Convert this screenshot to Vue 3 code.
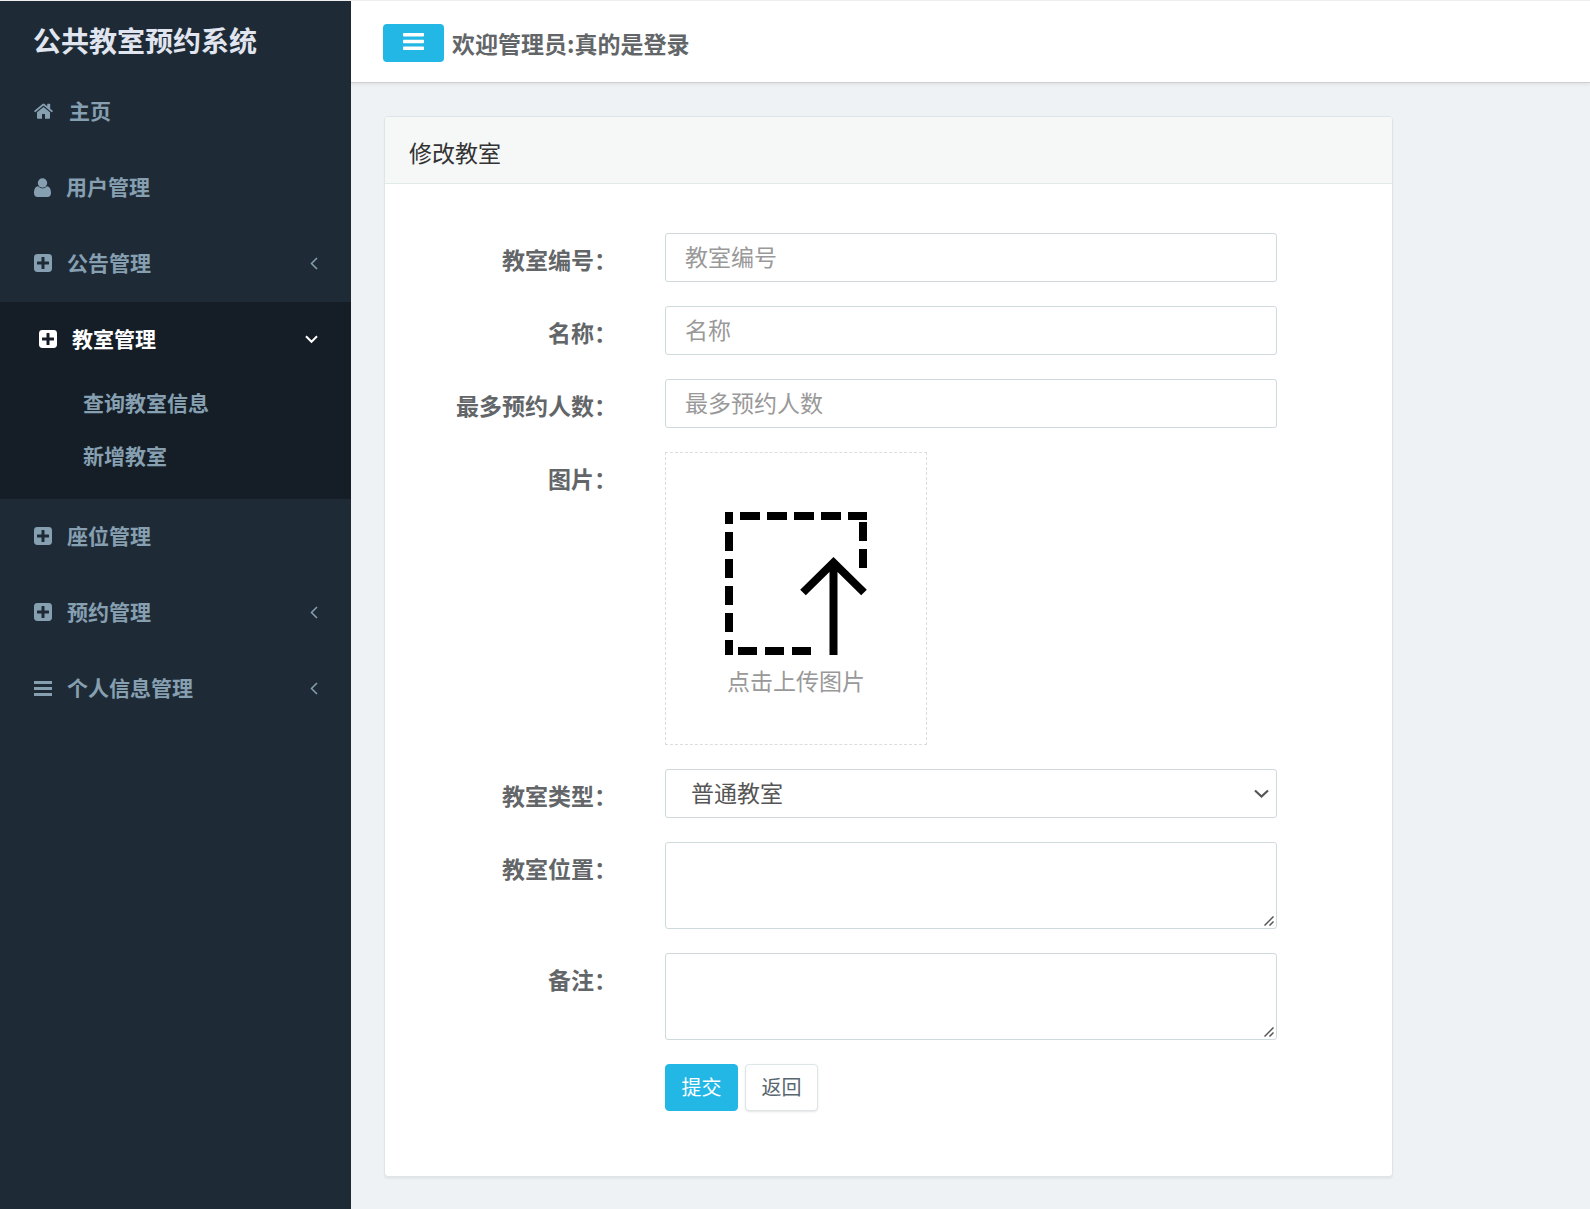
<script setup>
import { ref } from 'vue'

const menu = [
  { label: '主页', icon: 'home' },
  { label: '用户管理', icon: 'user' },
  { label: '公告管理', icon: 'plus', collapsible: true },
  { label: '教室管理', icon: 'plus', collapsible: true, children: ['查询教室信息', '新增教室'] },
  { label: '座位管理', icon: 'plus' },
  { label: '预约管理', icon: 'plus', collapsible: true },
  { label: '个人信息管理', icon: 'bars', collapsible: true },
]

const sidebarOpen = ref(true)
const form = ref({ number: '', name: '', capacity: '', type: '普通教室', location: '', remark: '' })
</script>

<template>
  <div class="layout">
    <aside v-show="sidebarOpen" class="sidebar">
      <h1 class="brand">公共教室预约系统</h1>
      <nav>
        <ul class="menu">
          <li v-for="item in menu" :key="item.label" :class="{ active: item.children }">
            <a href="#" class="menu-link">
              <svg v-if="item.icon === 'home'" width="20" height="16" viewBox="0 0 20 16" fill="currentColor" aria-hidden="true">
                <path d="M9.500 4 3 9.300V15a.8.800 0 0 0 .8.800h4.200V11h3v4.800h4.200a.8.800 0 0 0 .8-.8V9.300z" />
                <path d="M18.700 7.800 16.200 5.700V1.200a.5.500 0 0 0-.5-.5h-2a.5.500 0 0 0-.5.500v2L10.500.9a1.600 1.600 0 0 0-2 0L.3 7.800a.4.400 0 0 0 0 .6l.6.700q.3.300.7 0L9.500 2.500l7.900 6.600q.4.300.7 0l.6-.7a.4.400 0 0 0 0-.6z" />
              </svg>
              <svg v-else-if="item.icon === 'user'" width="17" height="19" viewBox="0 0 17 19" fill="currentColor" aria-hidden="true">
                <circle cx="8.500" cy="5" r="4.700" />
                <path d="M4 8.300C1.200 8.700 0 11.500 0 15c0 2.400 1.400 4 3.500 4h10c2.100 0 3.500-1.600 3.500-4 0-3.500-1.200-6.300-4-6.700A6 6 0 0 1 8.500 10.400 6 6 0 0 1 4 8.300z" />
              </svg>
              <svg v-else-if="item.icon === 'plus'" width="18" height="18" viewBox="0 0 18 18" fill="currentColor" fill-rule="evenodd" aria-hidden="true">
                <path d="M3.400 0h11.200A3.400 3.400 0 0 1 18 3.400v11.200a3.400 3.400 0 0 1-3.400 3.400H3.400A3.400 3.400 0 0 1 0 14.600V3.400A3.400 3.400 0 0 1 3.400 0zM8 3a.5.500 0 0 0-.5.500v4h-4a.5.500 0 0 0-.5.500v2a.5.500 0 0 0 .5.500h4v4a.5.500 0 0 0 .5.500h2a.5.500 0 0 0 .5-.5v-4h4a.5.500 0 0 0 .5-.5V8a.5.500 0 0 0-.5-.5h-4v-4A.5.500 0 0 0 10 3z" />
              </svg>
              <svg v-else width="18" height="15" viewBox="0 0 18 15" fill="currentColor" aria-hidden="true">
                <path d="M0 0h18v3H0zM0 6h18v3H0zM0 12h18v3H0z" />
              </svg>
              <span class="menu-text">{{ item.label }}</span>
              <svg v-if="item.children" width="13" height="9" viewBox="0 0 13 9" fill="none" stroke="currentColor" stroke-width="2" aria-hidden="true">
                <path d="M1 1.300 6.500 6.800 12 1.300" />
              </svg>
              <svg v-else-if="item.collapsible" width="8" height="13" viewBox="0 0 8 13" fill="none" stroke="currentColor" stroke-width="1.500" aria-hidden="true">
                <path d="M7 1 1.500 6.500 7 12" />
              </svg>
            </a>
            <ul v-if="item.children" class="submenu">
              <li v-for="child in item.children" :key="child"><a href="#">{{ child }}</a></li>
            </ul>
          </li>
        </ul>
      </nav>
    </aside>

    <div class="main">
      <header class="topbar">
        <button type="button" class="toggle" aria-label="菜单" @click="sidebarOpen = !sidebarOpen">
          <svg width="21" height="17" viewBox="0 0 21 17" fill="currentColor" aria-hidden="true">
            <rect width="21" height="3.600" rx=".8" /><rect y="6.700" width="21" height="3.600" rx=".8" /><rect y="13.400" width="21" height="3.600" rx=".8" />
          </svg>
        </button>
        <span class="welcome">欢迎管理员:真的是登录</span>
      </header>

      <main class="content">
        <section class="panel">
          <h2 class="panel-title">修改教室</h2>
          <form class="form" @submit.prevent>
            <label for="number">教室编号：</label>
            <input id="number" v-model="form.number" type="text" placeholder="教室编号">

            <label for="name">名称：</label>
            <input id="name" v-model="form.name" type="text" placeholder="名称">

            <label for="capacity">最多预约人数：</label>
            <input id="capacity" v-model="form.capacity" type="text" placeholder="最多预约人数">

            <label for="picture">图片：</label>
            <button id="picture" type="button" class="upload">
              <svg width="143" height="144" viewBox="0 0 143 144" fill="none" stroke="#000" stroke-width="8" aria-hidden="true">
                <path d="M4 1v12M4 21v19M4 48v19M4 75v19M4 102v19M4 129v15" />
                <path d="M15 5h20M42 5h20M69 5h20M96 5h20M123 5h19M138 11v19M138 38v19" />
                <path d="M13 140h19M40 140h19M67 140h19M108.500 144V52M78 81.500 108.500 51.500 139 81.500" />
              </svg>
              <span>点击上传图片</span>
            </button>

            <label for="type">教室类型：</label>
            <div class="field">
              <select id="type" v-model="form.type">
                <option>普通教室</option>
              </select>
              <svg class="select-arrow" width="15" height="10" viewBox="0 0 15 10" fill="none" stroke="#555" stroke-width="2.200" aria-hidden="true">
                <path d="M1 1.500 7.500 7.500 14 1.500" />
              </svg>
            </div>

            <label for="location">教室位置：</label>
            <div class="field">
              <textarea id="location" v-model="form.location"></textarea>
              <svg class="grip" width="10" height="10" viewBox="0 0 10 10" stroke="#555" stroke-width="1.500" aria-hidden="true">
                <path d="M.5 9.500 9.500.5M5.500 9.500l4-4" />
              </svg>
            </div>

            <label for="remark">备注：</label>
            <div class="field">
              <textarea id="remark" v-model="form.remark"></textarea>
              <svg class="grip" width="10" height="10" viewBox="0 0 10 10" stroke="#555" stroke-width="1.500" aria-hidden="true">
                <path d="M.5 9.500 9.500.5M5.500 9.500l4-4" />
              </svg>
            </div>

            <div class="actions">
              <button type="submit" class="btn primary">提交</button>
              <button type="button" class="btn">返回</button>
            </div>
          </form>
        </section>
      </main>
    </div>
  </div>
</template>

<style>
body {
  background: #eef2f4;
}
</style>

<style scoped>
.layout,
.layout * {
  box-sizing: border-box;
}

.layout {
  display: flex;
  min-height: 100vh;
  border-top: 1px solid #eee;
  font-family: "Noto Sans CJK SC", sans-serif;
  font-size: 23px;
  color: #636668;
}

input,
select,
textarea,
button {
  font-family: inherit;
  font-size: 23px;
}

ul {
  margin: 0;
  padding: 0;
  list-style: none;
}

a {
  color: inherit;
  text-decoration: none;
}

svg {
  flex: none;
}

.sidebar {
  flex: none;
  width: 351px;
  background: #1e2b36;
  color: #869fb1;
  font-size: 21px;
  font-weight: 700;
}

.brand {
  margin: 0;
  padding: 0 33px;
  color: #e1e5ef;
  font-size: 28px;
  line-height: 78px;
  height: 73px;
}

.menu-link {
  display: flex;
  align-items: center;
  gap: 15px;
  height: 76px;
  padding: 0 33px 2px 34px;
}

.menu-text {
  flex: 1;
  padding-bottom: 2px;
}

.active {
  padding-bottom: 15px;
  background: #151e26;
}

.active .menu-link {
  padding-left: 39px;
  color: #fff;
}

.submenu a {
  display: block;
  padding: 0 0 4px 83px;
  line-height: 49px;
}

.main {
  flex: 1;
  min-width: 0;
}

.topbar {
  display: flex;
  align-items: center;
  gap: 8px;
  height: 82px;
  padding: 2px 32px 0;
  border-bottom: 1px solid #cdcfd1;
  background: #fff;
  box-shadow: 0 2px 3px rgba(0, 0, 0, 0.06);
  font-weight: 700;
}

.toggle {
  display: flex;
  justify-content: center;
  width: 61px;
  height: 38px;
  padding: 9px 0;
  border: 0;
  border-radius: 4px;
  background: #23b7e5;
  color: #fff;
}

.content {
  padding: 33px 15.9% 32px 33px;
}

.panel {
  border: 1px solid #dde5e8;
  border-radius: 4px;
  background: #fff;
  box-shadow: 0 2px 2px rgba(0, 0, 0, 0.05);
}

.panel-title {
  margin: 0;
  padding: 18px 24px 13px;
  border-bottom: 1px solid #e2e9e9;
  border-radius: 3px 3px 0 0;
  background: #f6f8f8;
  color: #333;
  font-size: 23px;
  font-weight: 400;
  line-height: 35px;
}

.form {
  display: grid;
  grid-template-columns: 208px minmax(0, 1fr);
  gap: 24px 48px;
  padding: 49px 115px 65px 24px;
}

label {
  padding-top: 9px;
  font-weight: 700;
  line-height: 34px;
  text-align: right;
  white-space: nowrap;
}

input,
select,
textarea {
  display: block;
  width: 100%;
  height: 49px;
  margin: 0;
  padding: 0 19px 4px;
  border: 1px solid #cfdadd;
  border-radius: 3px;
  background: #fff;
  color: #555;
}

input::placeholder {
  color: #999;
}

select {
  padding: 0 25px 4px;
  appearance: none;
}

textarea {
  min-height: 87px;
  padding: 8px 19px;
  resize: vertical;
}

textarea::-webkit-resizer {
  background: transparent;
}

.field {
  position: relative;
}

.select-arrow,
.grip {
  position: absolute;
  pointer-events: none;
}

.select-arrow {
  top: 20px;
  right: 8px;
}

.grip {
  right: 3px;
  bottom: 3px;
}

.upload {
  display: flex;
  flex-direction: column;
  align-items: center;
  width: 262px;
  height: 293px;
  padding: 58px 0 0;
  border: 1px dashed #ddd;
  background: #fff;
  color: #999;
  line-height: 34px;
}

.upload span {
  padding-top: 8px;
}

.actions {
  display: flex;
  grid-column: 2;
  gap: 7px;
}

.btn {
  width: 73px;
  height: 47px;
  padding: 0 0 2px;
  border: 1px solid #dee5e7;
  border-radius: 4px;
  background: #fff;
  box-shadow: 0 1px 2px rgba(90, 90, 90, 0.15);
  color: #58666e;
  font-size: 20px;
}

.primary {
  border-color: #23b7e5;
  background: #23b7e5;
  box-shadow: none;
  color: #fff;
}
</style>
